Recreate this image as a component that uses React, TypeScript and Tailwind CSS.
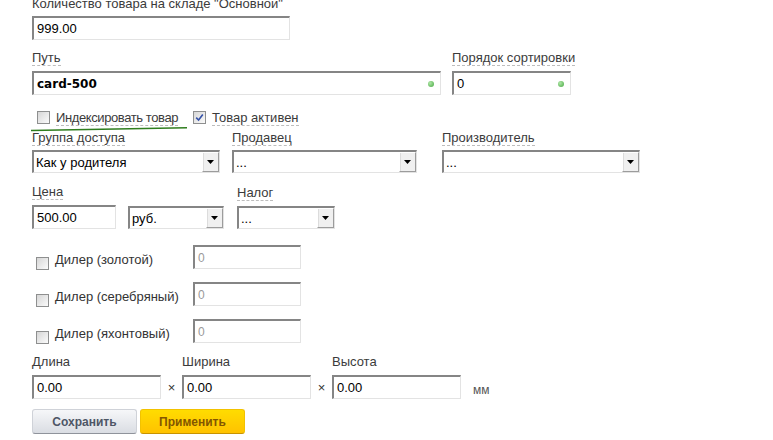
import React from "react";

const INPUT_BORDER =
  "border-t-2 border-l-2 border-r border-b border-t-[#858585] border-l-[#858585] border-r-[#e3e3e3] border-b-[#e3e3e3] bg-white";

function Label({
  children,
  dashed = true,
  extra = "",
}: {
  children: React.ReactNode;
  dashed?: boolean;
  extra?: string;
}) {
  return (
    <span
      className={`inline-block self-start text-[13px] leading-[15px] text-[#3b3b3b] ${extra} ${
        dashed ? "border-b border-dashed border-[#bdbdbd]" : "border-b border-transparent"
      }`}
    >
      {children}
    </span>
  );
}

function TextInput({
  value,
  w,
  bold = false,
  dot = false,
  muted = false,
}: {
  value: string;
  w: string;
  bold?: boolean;
  dot?: boolean;
  muted?: boolean;
}) {
  return (
    <div className={`relative flex items-center h-[24px] ${w} ${INPUT_BORDER} pl-[3px]`}>
      <span
        className={
          bold
            ? "font-['DejaVu_Sans',sans-serif] font-bold text-[12px] text-black"
            : muted
            ? "text-[12px] text-[#9a9a9a]"
            : "text-[13px] text-black"
        }
      >
        {value}
      </span>
      {dot && (
        <span className="absolute right-[6px] top-1/2 -translate-y-1/2 w-[6px] h-[6px] rounded-full bg-[radial-gradient(circle_at_35%_35%,#b0e6a8,#46a840)]" />
      )}
    </div>
  );
}

function Select({ value, w }: { value: string; w: string }) {
  return (
    <div className={`flex items-stretch h-[23px] ${w} ${INPUT_BORDER}`}>
      <span className="flex-1 pl-[2px] text-[13px] leading-[21px] text-black overflow-hidden whitespace-nowrap">
        {value}
      </span>
      <span className="w-[17px] flex items-center justify-center bg-[#f0f0f0] border-l border-t border-[#ffffff] border-r border-b border-r-[#9c9c9c] border-b-[#9c9c9c] shadow-[inset_1px_0_0_#dcdcdc]">
        <svg width="7" height="4" viewBox="0 0 7 4">
          <path d="M0 0h7L3.5 4z" fill="#000" />
        </svg>
      </span>
    </div>
  );
}

function Checkbox({ checked = false }: { checked?: boolean }) {
  return (
    <span className="flex items-center justify-center w-[13px] h-[13px] shrink-0 border border-[#8e8f8f] bg-linear-to-br from-[#d6d6d6] to-[#fbfbfb]">
      {checked && (
        <svg width="9" height="9" viewBox="0 0 9 9">
          <path d="M1.2 4.6l2.4 2.5L7.8 1.6" stroke="#3552a8" strokeWidth="1.6" fill="none" />
        </svg>
      )}
    </span>
  );
}

export default function App() {
  return (
    <div className="w-[773px] h-[440px] overflow-hidden bg-white pl-[32px] font-['Liberation_Sans',Arial,sans-serif] text-[#3b3b3b]">
      {/* Row 1 */}
      <div className="flex flex-col mt-[-4px]">
        <Label dashed={false}>Количество товара на складе "Основной"</Label>
        <div className="mt-[4px]">
          <TextInput value="999.00" w="w-[258px]" />
        </div>
      </div>

      {/* Row 2 */}
      <div className="flex gap-[11px] mt-[10px]">
        <div className="flex flex-col gap-[5px]">
          <Label>Путь</Label>
          <TextInput value="card-500" w="w-[409px]" bold dot />
        </div>
        <div className="flex flex-col gap-[5px]">
          <Label>Порядок сортировки</Label>
          <TextInput value="0" w="w-[119px]" dot />
        </div>
      </div>

      {/* Checkbox row */}
      <div className="relative flex items-center mt-[14px] pl-[5px] h-[16px]">
        <Checkbox />
        <span className="ml-[6px]">
          <Label extra="tracking-[-0.4px]">Индексировать товар</Label>
        </span>
        <span className="ml-[15px]">
          <Checkbox checked />
        </span>
        <span className="ml-[6px]">
          <Label>Товар активен</Label>
        </span>
        <svg className="absolute left-[-1px] top-[18px]" width="158" height="5" viewBox="0 0 158 5">
          <line x1="0" y1="3.5" x2="156" y2="0.8" stroke="#2f7d1e" strokeWidth="1.6" />
        </svg>
      </div>

      {/* Selects row */}
      <div className="flex mt-[5px]">
        <div className="flex flex-col gap-[4px] w-[200px]">
          <Label>Группа доступа</Label>
          <Select value="Как у родителя" w="w-[188px]" />
        </div>
        <div className="flex flex-col gap-[4px] w-[210px]">
          <Label>Продавец</Label>
          <Select value="..." w="w-[185px]" />
        </div>
        <div className="flex flex-col gap-[4px]">
          <Label>Производитель</Label>
          <Select value="..." w="w-[198px]" />
        </div>
      </div>

      {/* Price row */}
      <div className="flex items-end mt-[11px]">
        <div className="flex flex-col gap-[5px] w-[96px]">
          <Label>Цена</Label>
          <TextInput value="500.00" w="w-[84px]" />
        </div>
        <div className="w-[109px]">
          <Select value="руб." w="w-[96px]" />
        </div>
        <div className="flex flex-col gap-[5px]">
          <Label>Налог</Label>
          <Select value="..." w="w-[98px]" />
        </div>
      </div>

      {/* Dealers */}
      <div className="flex flex-col gap-[13px] mt-[16px]">
        {["Дилер (золотой)", "Дилер (серебряный)", "Дилер (яхонтовый)"].map((t) => (
          <div key={t} className="flex">
            <div className="w-[161px] flex items-start pl-[4px] pt-[7px] h-[24px]">
              <div className="flex mt-[5px]">
                <Checkbox />
              </div>
              <span className="ml-[6px] text-[13px] leading-[15px] text-[#333]">{t}</span>
            </div>
            <TextInput value="0" w="w-[108px]" muted />
          </div>
        ))}
      </div>

      {/* Dimensions */}
      <div className="flex items-end mt-[11px]">
        <div className="flex flex-col gap-[5px]">
          <Label dashed={false}>Длина</Label>
          <TextInput value="0.00" w="w-[129px]" />
        </div>
        <span className="w-[21px] text-center text-[13px] leading-[22px] text-[#333]">×</span>
        <div className="flex flex-col gap-[5px]">
          <Label dashed={false}>Ширина</Label>
          <TextInput value="0.00" w="w-[129px]" />
        </div>
        <span className="w-[21px] text-center text-[13px] leading-[22px] text-[#333]">×</span>
        <div className="flex flex-col gap-[5px]">
          <Label dashed={false}>Высота</Label>
          <TextInput value="0.00" w="w-[129px]" />
        </div>
        <span className="ml-[12px] text-[12px] leading-[15px] text-[#555] mb-[1px]">мм</span>
      </div>

      {/* Buttons */}
      <div className="flex gap-[3px] mt-[10px]">
        <button className="w-[105px] h-[25px] rounded-[3px] bg-linear-to-b from-[#f6f7f9] to-[#dadde3] border border-[#cfd2d8] border-b-[#8f939b] text-[12px] font-bold text-[#4e5666]">
          Сохранить
        </button>
        <button className="w-[105px] h-[25px] rounded-[3px] bg-linear-to-b from-[#ffdc00] to-[#ffc200] border border-[#f2c200] border-b-[#c79300] text-[12px] font-bold text-[#835600]">
          Применить
        </button>
      </div>
    </div>
  );
}
